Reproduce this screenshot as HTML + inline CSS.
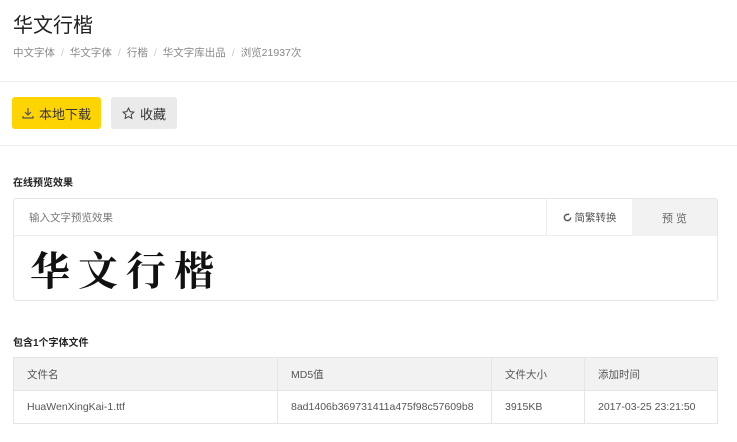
<!DOCTYPE html><html><head><meta charset="utf-8"><style>
*{margin:0;padding:0;box-sizing:border-box}
body{width:737px;height:442px;background:#fff;font-family:"Liberation Sans","Noto Sans CJK SC",sans-serif;color:#333;position:relative;overflow:hidden}
.a{position:absolute}
.t{left:13px;top:9px;font-size:20px;color:#222}
.bc{left:13px;top:45px;font-size:10.5px;color:#888;white-space:nowrap}
.bc span{color:#ccc;margin:0 6px}
.hr{left:0;width:737px;height:1px;background:#eee}
.btn{top:97px;height:32px;border-radius:3px;font-size:13px;display:flex;align-items:center;justify-content:center;gap:5px}
.h{font-size:10px;font-weight:bold;color:#222}
.box{left:13px;top:198px;width:705px;height:103px;border:1px solid #e6e6e6;border-radius:3px}
table{position:absolute;left:13px;top:357px;width:705px;border-collapse:collapse;font-size:10.5px;color:#555}
td{border:1px solid #e6e6e6;padding-left:13px;height:33px}
tr:first-child td{background:#f2f2f2}
</style></head><body>
<div class="a t">华文行楷</div>
<div class="a bc">中文字体<span>/</span>华文字体<span>/</span>行楷<span>/</span>华文字库出品<span>/</span>浏览21937次</div>
<div class="a hr" style="top:81px"></div>
<div class="a btn" style="left:12px;width:89px;background:#ffd400;color:#333"><svg width="12" height="12" viewBox="0 0 12 12" fill="none" stroke="#555" stroke-width="1.2"><path d="M6 1v7M3 5l3 3 3-3M1 9v2h10V9"/></svg>本地下载</div>
<div class="a btn" style="left:111px;width:66px;background:#eaeaea;color:#333"><svg width="13" height="13" viewBox="0 0 14 14" fill="none" stroke="#444" stroke-width="1.1"><path d="M7 1.2l1.8 3.8 4 .5-3 2.8.8 4L7 10.3 3.4 12.3l.8-4-3-2.8 4-.5z"/></svg>收藏</div>
<div class="a hr" style="top:145px"></div>
<div class="a h" style="left:13px;top:174px">在线预览效果</div>
<div class="a box">
<div class="a" style="left:0;top:0;width:703px;height:37px;border-bottom:1px solid #eee"></div>
<div class="a" style="left:15px;top:11px;font-size:10.5px;color:#777">输入文字预览效果</div>
<div class="a" style="left:532px;top:0;width:86px;height:37px;border-left:1px solid #eee;font-size:10.5px;color:#555;display:flex;align-items:center;justify-content:center;gap:3px"><svg width="9" height="9" viewBox="0 0 10 10" fill="none" stroke="#555" stroke-width="1.6"><path d="M8.5 5A3.5 3.5 0 1 1 5 1.5H7"/></svg>简繁转换</div>
<div class="a" style="left:618px;top:0;width:85px;height:37px;background:#f2f2f2;font-size:11px;color:#666;display:flex;align-items:center;justify-content:center">预 览</div>
<div class="a" style="left:16px;top:42px;font-family:'Noto Serif CJK SC',serif;font-weight:bold;font-size:40px;letter-spacing:8px;color:#111;line-height:56px">华文行楷</div>
</div>
<div class="a h" style="left:13px;top:334px">包含1个字体文件</div>
<table><tr><td style="width:264px">文件名</td><td style="width:214px">MD5值</td><td style="width:93px">文件大小</td><td>添加时间</td></tr>
<tr><td>HuaWenXingKai-1.ttf</td><td>8ad1406b369731411a475f98c57609b8</td><td>3915KB</td><td>2017-03-25 23:21:50</td></tr></table>
</body></html>
